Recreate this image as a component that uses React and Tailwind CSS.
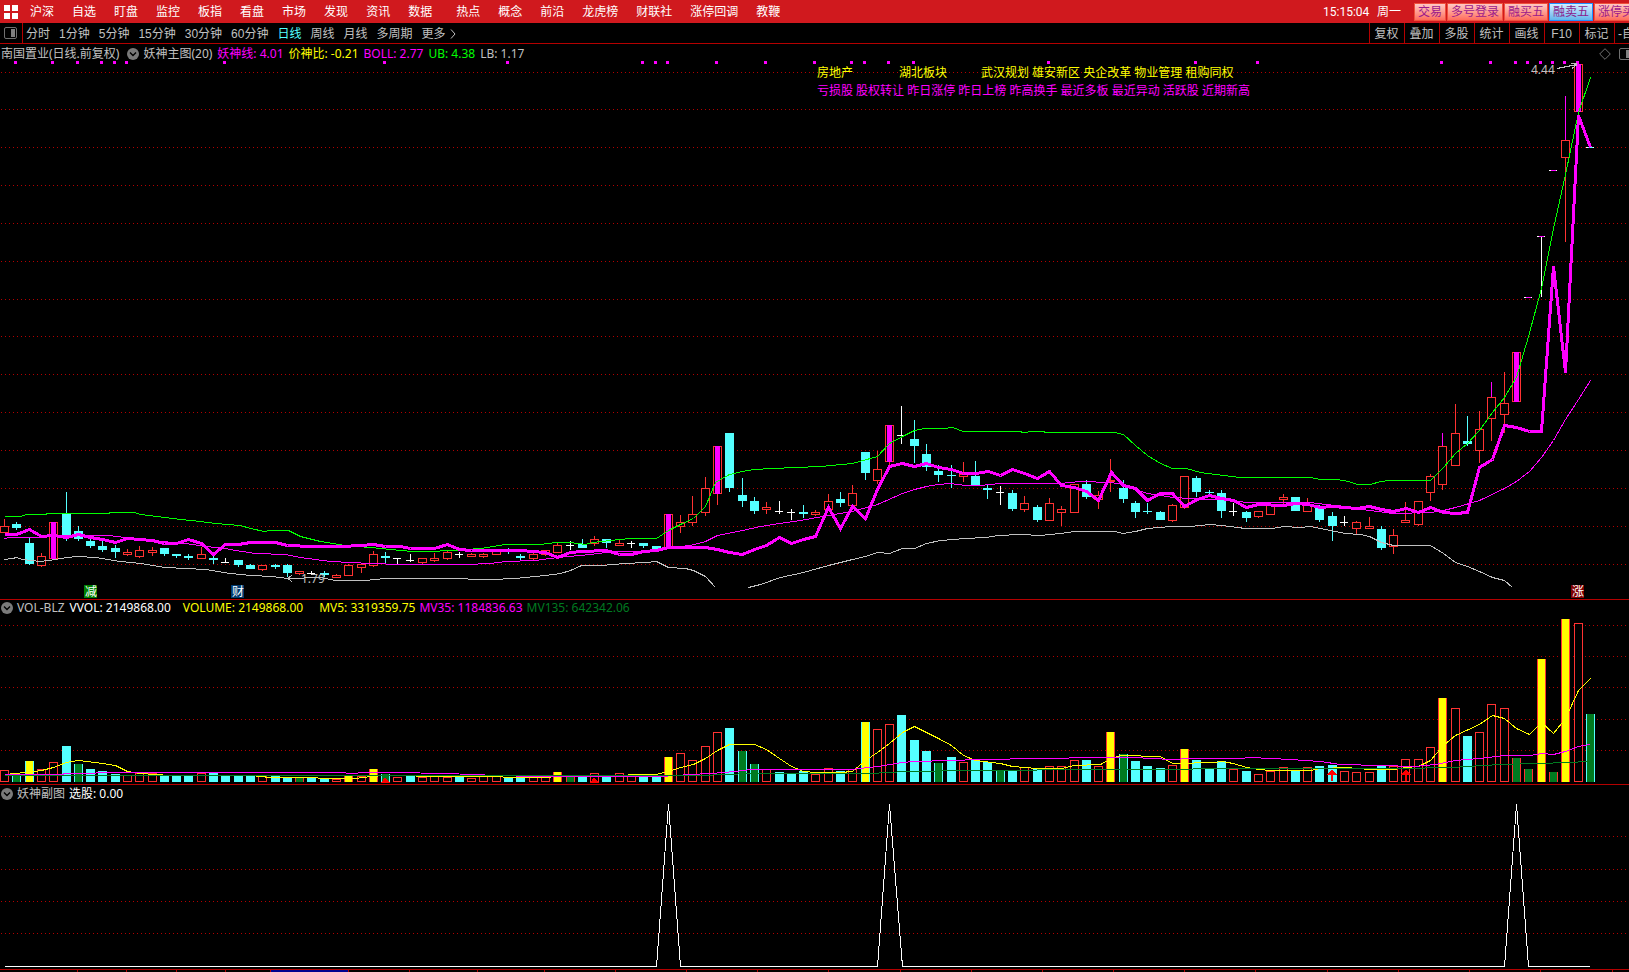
import React from "react";

const MENU = ["沪深", "自选", "盯盘", "监控", "板指", "看盘", "市场", "发现", "资讯", "数据"];
const MENU_MORE = ["热点", "概念", "前沿", "龙虎榜", "财联社", "涨停回调", "教鞭"];
const PERIODS = ["分时", "1分钟", "5分钟", "15分钟", "30分钟", "60分钟", "日线", "周线", "月线", "多周期"];
const TOOLS = ["复权", "叠加", "多股", "统计", "画线", "F10", "标记"];
const TRADES = ["交易", "多号登录", "融买五", "融卖五", "涨停买"];

const RED = "#ff3232";
const CYAN = "#54ffff";
const PINK = "#ff00ff";
const YELLOW = "#ffff00";
const GREEN = "#007a20";
const GREY = "#c0c0c0";

// Each candle: kind, high, body top, body bottom, low.
// r = rising (hollow), c = falling (solid), w = flat, m = limit-up, d = one-price day, t = dash with wick, p = rising with pink upper wick
const CANDLES = `r 519 526 533 533|c 522 524 528 530|c 538 543 564 565|r 553 556 566 567|m 522 522 559 559|c 492 513 535 541|c 526 531 539 541|c 539 541 546 548|c 541 546 550 552|c 545 548 552 558
r 549 552 555 556|r 546 550 557 558|r 547 550 553 556|c 548 548 554 556|c 554 554 556 558|c 554 556 558 560|r 547 554 559 559|c 556 558 560 564|w 558 562 563 563|c 560 560 565 567
c 564 565 569 569|r 565 565 570 571|c 564 565 567 569|c 564 565 573 577|r 571 571 574 575|w 571 573 574 575|c 571 573 575 577|r 574 575 578 578|r 564 565 576 576|r 564 564 568 573
r 551 554 566 567|c 552 556 558 563|w 558 558 559 564|w 554 560 561 562|r 558 558 563 564|r 553 558 561 562|r 551 552 559 560|w 552 554 555 558|r 553 554 557 557|r 553 554 557 558
r 551 551 555 555|c 548 550 551 554|c 554 556 558 560|r 552 554 559 560|r 550 550 555 556|r 543 545 553 553|w 541 545 546 550|c 539 544 548 548|r 536 539 544 546|c 539 539 543 548
r 540 543 546 546|w 541 543 544 548|c 543 543 546 548|c 546 546 549 549|m 514 514 549 549|r 515 522 527 533|r 496 514 523 526|r 477 488 513 516|m 446 446 494 505|c 433 433 488 492
c 478 495 501 507|c 497 501 511 514|r 502 507 510 514|w 501 511 512 514|w 509 512 513 520|c 505 512 514 518|r 510 512 515 516|r 494 501 510 510|c 492 499 503 507|r 485 493 506 506
c 452 452 473 480|r 451 469 481 484|m 425 425 462 466|w 406 435 436 444|c 420 439 446 463|c 444 454 467 471|c 465 471 475 482|c 465 475 476 488|r 462 474 477 482|c 461 476 485 485
c 485 488 490 499|w 486 492 493 505|c 490 493 509 511|r 496 503 510 512|c 505 507 520 522|r 498 503 521 521|r 506 509 513 526|r 484 484 513 513|c 480 484 497 499|r 491 495 500 509
r 459 480 482 492|c 480 488 499 503|c 501 503 512 518|c 503 511 512 514|c 511 512 520 520|r 504 505 521 522|r 476 476 508 509|c 476 478 492 497|c 490 492 493 496|c 490 493 511 518
w 503 511 512 516|c 511 512 518 522|r 511 511 517 518|r 505 505 515 515|r 494 497 500 504|c 497 497 511 511|r 498 505 512 512|c 505 507 520 522|c 512 516 526 541|w 516 522 523 526
r 521 522 529 535|r 517 526 529 529|c 526 529 548 550|r 529 535 547 554|r 502 520 523 523|r 501 501 525 526|r 474 476 493 501|p 433 446 485 490|r 404 433 466 466|c 416 441 444 446
r 411 429 451 463|p 382 397 419 441|r 372 403 415 433|m 352 352 402 402|d 297 297 298 298|t 236 236 237 297|d 170 170 171 171|p 96 140 158 242|m 64 64 112 145|d 147 147 148 148`
  .split(/[|\n]/)
  .map((row) => {
    const [kind, ...v] = row.trim().split(" ");
    return [kind, ...v.map(Number)];
  });

// Each volume bar: fill kind, edge kind for coloured bars, then top coordinate.
const VOLUMES = `r770 gc775 yc761 r769 r762 c746 gc764 c769 c771 c774 r775 r773 r773 c775 c775 c775 r773 c773 c775 c776 c776 r776 c776 c777 gr777 c778 c778 r779 yr776 r776 yr769 gc774 r777 c775 r777 r776 r777 c776 r778 r776 r776 c778 c778 r776 r777 yr772 gr776 c776 r773 c776 r773 r776 c776 c776 yr757 r753 r760 r746 r732 c728 gc751 gc764 r769 c772 c774 c771 r774 r768 c771 r769 yc722 r729 r724 c715 c740 c751 gc763 c757 r762 c760 c762 gc771 c771 r767 c768 r766 r766 r760 c760 r766 yr732 gc754 c761 c766 c768 r765 yr749 c760 c768 c761 r769 c771 r774 r771 r767 c771 r767 c766 c765 r771 r772 r772 c766 r766 r759 r759 r747 yr698 r708 c736 r732 r704 r708 gr758 gr769 yr659 gr772 yr619 r623 gc714`
  .split(" ")
  .map((s) => [s.slice(0, -3), Number(s.slice(-3))]);

const SIGNALS = [1, 4, 6, 8, 9, 10, 18, 31, 41, 52, 53, 54, 58, 62, 66, 69, 70, 72, 74, 85, 97, 102, 117, 121, 123, 124, 125, 126, 127, 128];

const UB = "4,516 20,516 26,514 44,514 48,513 108,513 110,512 134,512 140,514 165,517 180,519 200,521 215,523 240,525 250,528 264,531 270,530 288,530 300,536 320,541 345,545 370,547 400,550 412,551 430,551 450,550 480,548 505,544 540,544 555,542 570,542 585,544 592,542 610,540 630,538 656,538 668,530 680,524 693,518 705,506 715,482 720,479 729,474 742,471 754,469 772,468 796,467 820,466 852,463 877,456 889,443 902,436 914,430 924,428 943,428 952,427 963,431 1018,431 1024,432 1032,431 1042,431 1046,432 1114,432 1123,434 1135,445 1147,455 1160,463 1172,468 1186,468 1200,472 1215,474 1240,477 1310,477 1320,479 1336,479 1348,481 1357,484 1370,484 1380,481 1390,480 1430,480 1443,467 1455,453 1467,443 1479,430 1492,412 1504,397 1516,377 1528,336 1541,288 1553,228 1565,174 1578,112 1590,77";
const BOLL = "4,538 10,537 28,537 53,536 66,535 108,535 125,537 150,540 185,543 205,546 225,548 235,550 255,553 285,554 300,557 330,561 350,562 370,563 400,564 465,564 490,563 505,561 535,560 557,557 590,554 605,552 625,551 640,551 668,547 690,545 705,541 717,535 742,530 760,526 779,523 800,520 828,515 852,511 877,504 902,493 914,489 926,486 938,484 950,483 965,485 980,485 1000,483 1060,483 1080,481 1110,482 1123,484 1135,489 1147,493 1160,495 1172,497 1190,498 1205,499 1221,499 1235,501 1250,502 1310,502 1325,504 1345,506 1356,508 1369,510 1393,513 1430,512 1443,510 1455,507 1479,500 1504,488 1516,481 1529,471 1541,457 1553,440 1565,419 1578,399 1590,380";
const LB_LEFT = "4,559 12,558 16,557 22,559 40,561 55,559 66,557 78,556 95,557 120,561 140,563 165,567 205,569 230,573 250,575 272,576 287,578 320,577 335,580 365,580 385,578 465,578 470,579 490,579 515,578 545,575 560,573 570,570 581,565 600,565 625,563 645,562 656,561 668,567 685,568 693,570 705,576 715,587";
const LB_RIGHT = "748,587 760,584 780,577 803,572 828,565 852,559 865,556 877,552 889,553 902,548 914,548 926,543 940,540 965,538 985,537 998,535 1020,534 1040,535 1060,533 1074,531 1114,531 1123,533 1135,531 1147,528 1170,526 1190,526 1210,524 1221,525 1245,528 1272,528 1283,526 1300,527 1310,526 1325,529 1345,533 1360,534 1369,536 1381,542 1393,545 1430,545 1443,553 1455,562 1467,566 1479,571 1492,577 1504,580 1512,587";
const YAO = "4,534 16,534 29,529 41,536 53,535 66,537 78,534 90,537 102,539 115,542 127,538 152,540 164,543 176,543 188,539 201,543 213,554 225,544 238,544 250,542 275,542 287,545 311,546 340,546 361,545 373,544 385,546 400,546 410,548 434,548 447,544 459,549 471,550 520,550 545,552 557,557 570,552 582,551 606,550 619,554 631,554 643,551 656,550 668,547 705,547 717,549 729,552 742,554 754,549 766,545 779,537 791,543 803,539 815,536 828,507 840,528 852,506 865,518 877,489 889,466 902,463 914,466 926,463 938,467 951,469 963,473 975,473 988,471 1000,475 1012,469 1024,473 1037,478 1049,471 1061,485 1074,487 1086,491 1098,500 1111,472 1123,485 1135,488 1147,500 1160,493 1172,493 1184,506 1197,499 1209,495 1221,498 1233,500 1246,507 1258,504 1283,505 1295,503 1307,504 1320,507 1332,506 1344,507 1356,508 1369,506 1381,509 1393,511 1406,508 1418,512 1430,507 1443,512 1455,513 1467,512 1479,467 1492,459 1504,425 1516,427 1529,431 1541,431 1553,266 1565,372 1578,115 1590,147";
const MV5 = "10,773 29,772 41,770 53,767 66,762 78,760 102,763 115,765 127,771 140,773 170,775 250,775 270,777 300,777 335,778 355,778 370,776 385,775 410,775 420,776 500,776 505,777 545,777 557,776 565,775 600,775 655,774 668,771 680,767 693,764 705,758 717,750 729,744 754,744 766,749 779,758 791,766 803,771 815,772 840,772 852,771 865,760 877,752 889,743 902,732 914,726 938,738 951,745 963,755 975,760 1000,763 1012,766 1037,768 1061,768 1074,765 1100,764 1111,758 1120,755 1160,756 1172,763 1215,762 1221,761 1233,763 1246,767 1258,769 1270,770 1310,770 1320,768 1345,767 1369,769 1393,769 1406,767 1418,766 1430,760 1443,745 1455,735 1479,724 1492,715 1504,718 1516,728 1529,734 1541,722 1553,733 1565,718 1578,690 1590,678";
const MV35 = "4,774 60,774 66,773 95,773 96,772 340,772 350,773 365,772 400,772 478,774 490,775 540,776 660,776 690,774 710,773 735,771 750,769 850,769 877,766 902,762 914,761 950,760 980,759 1040,758 1098,757 1135,757 1150,758 1172,759 1190,758 1240,758 1250,757 1290,759 1320,761 1340,764 1380,765 1415,766 1435,764 1455,760 1479,758 1504,755 1530,755 1541,753 1553,754 1565,751 1578,746 1590,744";
const MV135 = "4,775 700,775 750,773 870,773 905,771 970,770 1105,769 1190,769 1195,768 1400,768 1450,767 1500,764 1540,763 1565,762 1590,761";

const AXIS_TICKS = [77, 126, 176, 225, 270, 348, 409, 477, 544, 615, 686, 757, 828, 900, 971, 1042, 1113, 1184, 1255, 1327, 1398, 1469, 1540, 1612];

const barX = (i) => Math.round(4.09 + i * 12.2925);

function Grid({ rows }) {
  return rows.map((y) => (
    <line key={y} x1="1" x2="1629" y1={y + 0.5} y2={y + 0.5} stroke="#b40000" strokeDasharray="1 3" />
  ));
}

function Line({ points, color, width = 1 }) {
  return <polyline points={points} transform="translate(0.5 0.5)" fill="none" stroke={color} strokeWidth={width} />;
}

function Frame({ x, top, bottom, fill = "#000" }) {
  return <rect x={x - 3.5} y={top + 0.5} width="8" height={Math.max(1, bottom - top - 1)} fill={fill} stroke={RED} />;
}

function Candle({ i, data }) {
  const [kind, high, top, bottom, low] = data;
  const x = barX(i);
  const wick = (from, to, color) => (to > from ? <rect x={x} y={from} width="1" height={to - from} fill={color} /> : null);
  if (kind === "c") {
    return (
      <g>
        {wick(high, low, CYAN)}
        <rect x={x - 4} y={top} width="9" height={bottom - top} fill={CYAN} />
      </g>
    );
  }
  if (kind === "w") {
    return (
      <g>
        {wick(high, low, "#fff")}
        <rect x={x - 4} y={top} width="8" height="1" fill="#fff" />
      </g>
    );
  }
  if (kind === "d" || kind === "t") {
    return (
      <g>
        {wick(top, low, "#fff")}
        <rect x={x - 4} y={top} width="8" height="1" fill="#fff" />
        <rect x={x - 2} y={top} width="5" height="1" fill={i === 129 ? CYAN : PINK} />
      </g>
    );
  }
  return (
    <g>
      {wick(high, top, kind === "p" ? PINK : RED)}
      {wick(bottom, low, RED)}
      <Frame x={x} top={top} bottom={bottom} />
      {kind === "m" && <rect x={x - 2} y={top} width="5" height={bottom - top} fill={PINK} />}
    </g>
  );
}

function Volume({ i, data }) {
  const [kind, top] = data;
  const x = barX(i);
  if (kind === "r") return <Frame x={x} top={top} bottom={782} />;
  if (kind === "c") return <rect x={x - 4} y={top} width="9" height={782 - top} fill={CYAN} />;
  return (
    <g>
      <rect x={x - 4} y={top} width="9" height={782 - top} fill={kind[1] === "r" ? RED : CYAN} />
      <rect x={x - 3} y={top} width="7" height={782 - top} fill={kind[0] === "y" ? YELLOW : GREEN} />
    </g>
  );
}

function Badge({ x, color, label }) {
  return (
    <g>
      <rect x={x} y="585" width="13" height="13" fill={color} />
      <text x={x + 1} y="596" fill="#fff" fontSize="12">{label}</text>
    </g>
  );
}

function Toggle({ label }) {
  return (
    <button aria-label={label} className="shrink-0">
      <svg viewBox="0 0 12 12" className="block size-3">
        <circle cx="6" cy="6" r="6" fill="#7a7a7a" />
        <path d="M3 4.6 6 7.6 9 4.6" fill="none" stroke="#000" strokeWidth="1.4" />
      </svg>
    </button>
  );
}

function PanelIcon() {
  return (
    <svg viewBox="0 0 13 12" className="block h-3 w-[13px] shrink-0">
      <rect x="0.5" y="0.5" width="12" height="11" rx="1.5" fill="none" stroke="#707070" />
      <rect x="7" y="2" width="4" height="8" fill="#808080" />
    </svg>
  );
}

function MainChart() {
  return (
    <svg viewBox="0 60 1629 539" className="block h-auto w-full" role="img" aria-label="日线主图">
      <g shapeRendering="crispEdges">
        <Grid rows={[72, 109, 147, 185, 223, 261, 299, 336, 374, 412, 450, 488, 526, 564]} />
        {SIGNALS.map((i) => (
          <rect key={i} x={barX(i) - 2} y="61" width="3" height="3" fill={PINK} />
        ))}
        {CANDLES.map((c, i) => (
          <Candle key={i} i={i} data={c} />
        ))}
        <Line points={LB_LEFT} color={GREY} />
        <Line points={LB_RIGHT} color={GREY} />
        <Line points={BOLL} color={PINK} />
        <Line points={UB} color="#00ff00" />
        <Line points={YAO} color={PINK} width={3} />
        <path d="M1557 68.5 1577 64.5M1571 63.5H1577M1572 68.5 1577 64.5" fill="none" stroke={GREY} />
        <path d="M288 578.5H301M288 578.5 292 575M288 578.5 292 582" fill="none" stroke={GREY} />
      </g>
      <g fontSize="12">
        <text x="1531" y="74" fill={GREY}>4.44</text>
        <text x="301" y="583" fill={GREY}>1.79</text>
        <g fill={YELLOW}>
          <text x="817" y="77">房地产</text>
          <text x="899" y="77">湖北板块</text>
          <text x="981" y="77">武汉规划 雄安新区 央企改革 物业管理 租购同权</text>
        </g>
        <text x="817" y="95" fill={PINK}>亏损股 股权转让 昨日涨停 昨日上榜 昨高换手 最近多板 最近异动 活跃股 近期新高</text>
      </g>
      <Badge x={84} color="#008000" label="减" />
      <Badge x={231} color="#003a70" label="财" />
      <Badge x={1571} color="#800000" label="涨" />
    </svg>
  );
}

function VolumeChart() {
  return (
    <svg viewBox="0 616 1629 168" className="block h-auto w-full" role="img" aria-label="成交量">
      <g shapeRendering="crispEdges">
        <Grid rows={[625, 656, 687, 719, 750]} />
        {VOLUMES.map((v, i) => (
          <Volume key={i} i={i} data={v} />
        ))}
        <Line points={MV5} color={YELLOW} />
        <Line points={MV35} color={PINK} />
        <Line points={MV135} color={GREEN} />
        {[385, 594].map((x) => (
          <path key={x} d={`M${x} 777L${x + 5} 783H${x - 4}Z`} fill="#ff0000" />
        ))}
        {[1332, 1406].map((x) => (
          <path key={x} d={`M${x} 769L${x + 5} 775H${x + 1}V781H${x - 1}V775H${x - 5}Z`} fill="#ff0000" />
        ))}
      </g>
    </svg>
  );
}

function SignalChart() {
  return (
    <svg viewBox="0 801 1629 168" className="block h-auto w-full" role="img" aria-label="选股信号">
      <g shapeRendering="crispEdges">
        <Grid rows={[836, 869, 901, 933]} />
        <Line
          points="4,966 656,966 668,804 680,966 877,966 889,804 902,966 1504,966 1516,804 1528,966 1589,966"
          color="#fff"
        />
      </g>
    </svg>
  );
}

export default function App() {
  return (
    <div className="min-h-screen overflow-hidden bg-black font-['Noto_Sans','Noto_Sans_CJK_SC',sans-serif] text-xs leading-4 whitespace-nowrap text-[#c0c0c0]">
      <header className="flex h-[23px] items-center overflow-hidden bg-[#d0191e] text-white">
        <button aria-label="主菜单" className="mr-3 ml-1 shrink-0">
          <svg viewBox="0 0 14 14" className="block size-3.5" fill="#fff">
            <path d="M0 0h6v6H0zM8 0h6v6H8zM0 8h6v6H0zM8 8h6v6H8z" />
          </svg>
        </button>
        <nav className="flex gap-6">
          {[MENU, MENU_MORE].map((group) => (
            <div key={group[0]} className="flex gap-[18px]">
              {group.map((m) => (
                <a key={m} href="#">{m}</a>
              ))}
            </div>
          ))}
        </nav>
        <div className="ml-auto flex w-[306px] shrink-0 items-center">
          <time className="w-[54px] shrink-0 font-['Roboto',sans-serif]">15:15:04</time>
          <span className="w-[37px] shrink-0">周一</span>
          <div className="flex gap-px">
            {TRADES.map((t) => (
              <button
                key={t}
                className={
                  t === "融卖五"
                    ? "flex h-[18px] items-center border border-[#1e90ff] bg-linear-to-b from-[#d4efff] to-[#62b4ec] px-[3px] pt-px text-[#8b1a8b]"
                    : "flex h-[18px] items-center border border-[#f0503c] bg-linear-to-b from-[#ffc8c4] to-[#ff6c5c] px-[3px] pt-px text-[#9b1a8b]"
                }
              >
                {t}
              </button>
            ))}
          </div>
        </div>
      </header>

      <div className="flex h-[21px] items-stretch border-b border-[#b40000] font-['Liberation_Sans','Noto_Sans_CJK_SC',sans-serif]">
        <button aria-label="侧栏" className="flex w-[23px] shrink-0 items-center border-r border-[#b40000] pl-1">
          <PanelIcon />
        </button>
        <nav className="ml-[3px] flex items-center gap-[9px] pt-0.5">
          {PERIODS.map((p) => (
            <button key={p} className={p === "日线" ? "text-[#54ffff]" : ""}>{p}</button>
          ))}
          <button className="flex items-center gap-1">
            更多
            <svg viewBox="0 0 6 10" className="h-2.5 w-1.5" fill="none" stroke="#c0c0c0">
              <path d="M1 0.5 5 5 1 9.5" />
            </svg>
          </button>
        </nav>
        <div className="ml-auto flex w-[260px] shrink-0 overflow-hidden">
          {TOOLS.map((t) => (
            <button key={t} className="w-[35px] shrink-0 border-l border-[#b40000] pt-0.5 pr-px">{t}</button>
          ))}
          <button className="shrink-0 border-l border-[#b40000] pt-0.5 pl-[3px]">-自选</button>
        </div>
      </div>

      <section className="border-b border-[#b40000]">
        <div className="flex h-4 items-center gap-[5px] pt-1 pl-px">
          <h1 className="flex items-center gap-1">
            <span className="mr-1">南国置业(日线.前复权)</span>
            <Toggle label="主图指标" />
            <span>妖神主图(20)</span>
          </h1>
          <span className="text-[#ff00ff]">妖神线: 4.01</span>
          <span className="text-[#ffff00]">价神比: -0.21</span>
          <span className="text-[#ff00ff]">BOLL: 2.77</span>
          <span className="text-[#00ff00]">UB: 4.38</span>
          <span>LB: 1.17</span>
          <div className="-mr-[3px] ml-auto flex shrink-0 items-center gap-2">
            <svg viewBox="0 0 12 12" className="size-3" fill="none" stroke="#707070">
              <path d="M6 0.7 11.3 6 6 11.3 0.7 6Z" />
            </svg>
            <PanelIcon />
          </div>
        </div>
        <MainChart />
      </section>

      <section className="border-b border-[#b40000]">
        <div className="flex h-4 items-center gap-1 pl-px">
          <Toggle label="成交量指标" />
          <h2>VOL-BLZ</h2>
          <span className="ml-px text-white">VVOL: 2149868.00</span>
          <span className="ml-2 text-[#ffff00]">VOLUME: 2149868.00</span>
          <span className="ml-3 text-[#ffff00]">MV5: 3319359.75</span>
          <span className="text-[#ff00ff]">MV35: 1184836.63</span>
          <span className="text-[#007a20]">MV135: 642342.06</span>
        </div>
        <VolumeChart />
      </section>

      <section className="border-b border-[#b40000]">
        <div className="flex h-4 items-center gap-1 pt-px pl-px">
          <Toggle label="副图指标" />
          <h2>妖神副图</h2>
          <span className="text-white">选股: 0.00</span>
        </div>
        <SignalChart />
      </section>

      <svg viewBox="0 0 1629 2" className="block h-auto w-full" shapeRendering="crispEdges" aria-hidden="true">
        <rect x="271" width="77" height="2" fill="#000090" />
        {AXIS_TICKS.map((x) => (
          <rect key={x} x={x} width="1" height="2" fill="#b40000" />
        ))}
      </svg>
    </div>
  );
}
